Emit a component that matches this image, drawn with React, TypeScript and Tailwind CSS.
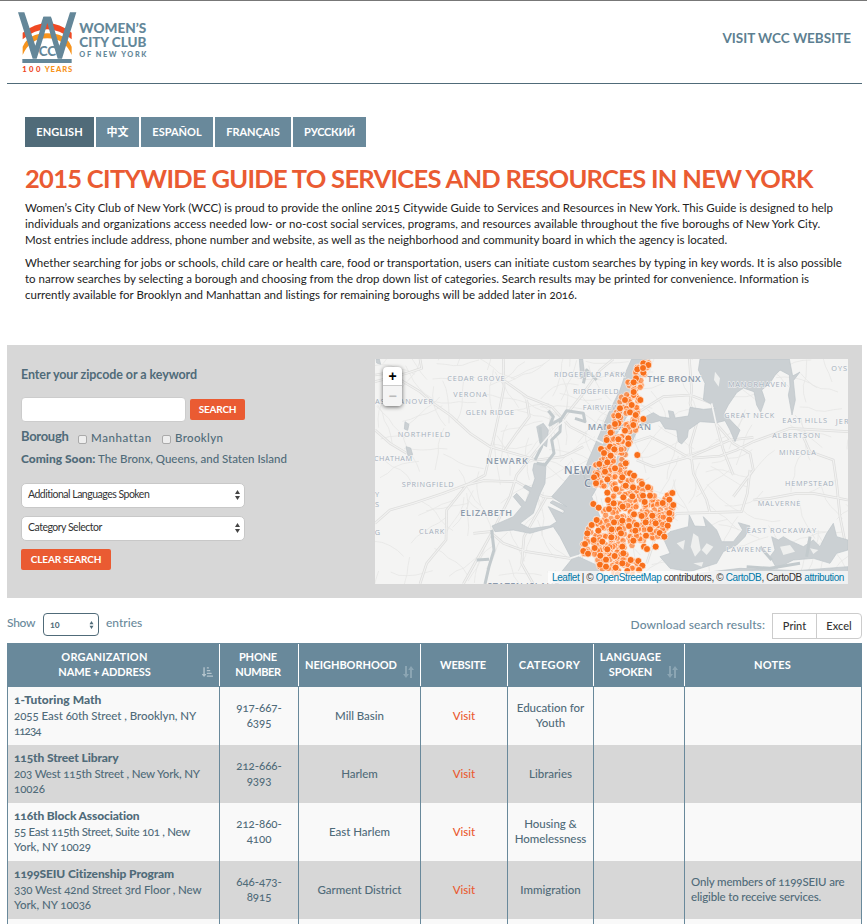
import { FaSortAmountDownAlt } from "react-icons/fa";

const tabs = [
  { label: "ENGLISH", cls: "w-[69px] bg-[#506b79]" },
  { label: "中文", cls: "w-[43px] bg-[#69899b]" },
  { label: "ESPAÑOL", cls: "w-[72px] bg-[#69899b]" },
  { label: "FRANÇAIS", cls: "w-[76px] bg-[#69899b]" },
  { label: "РУССКИЙ", cls: "w-[73px] bg-[#69899b] tracking-[-0.25px]" },
];

const intro = [
  [
    ["Women’s City Club of New York (WCC) is proud to provide the online 2015 Citywide Guide to Services and Resources in New York. This Guide is designed to help", "tracking-[-0.01px]"],
    ["individuals and organizations access needed low- or no-cost social services, programs, and resources available throughout the five boroughs of New York City.", "tracking-[0.027px]"],
    ["Most entries include address, phone number and website, as well as the neighborhood and community board in which the agency is located.", "tracking-[0.002px]"],
  ],
  [
    ["Whether searching for jobs or schools, child care or health care, food or transportation, users can initiate custom searches by typing in key words. It is also possible", "tracking-[0.008px]"],
    ["to narrow searches by selecting a borough and choosing from the drop down list of categories. Search results may be printed for convenience. Information is", "tracking-[0.003px]"],
    ["currently available for Brooklyn and Manhattan and listings for remaining boroughs will be added later in 2016.", "tracking-[-0.008px]"],
  ],
];

const rows = [
  { name: "1-Tutoring Math", nameCls: "tracking-[0.03px]", addr: ["2055 East 60th Street , Brooklyn, NY", "11234"], addrCls: ["tracking-[-0.05px]", "tracking-[-0.9px]"], phone: ["917-667-", "6395"], hood: "Mill Basin", cat: ["Education for", "Youth"], notes: [] as string[] },
  { name: "115th Street Library", nameCls: "tracking-[-0.12px]", addr: ["203 West 115th Street , New York, NY", "10026"], addrCls: ["tracking-[-0.17px]", ""], phone: ["212-666-", "9393"], hood: "Harlem", cat: ["Libraries"], notes: [] },
  { name: "116th Block Association", nameCls: "tracking-[-0.14px]", addr: ["55 East 115th Street, Suite 101 , New", "York, NY 10029"], addrCls: ["tracking-[-0.3px]", "tracking-[-0.05px]"], phone: ["212-860-", "4100"], hood: "East Harlem", cat: ["Housing &", "Homelessness"], notes: [] },
  { name: "1199SEIU Citizenship Program", nameCls: "tracking-[-0.1px]", addr: ["330 West 42nd Street 3rd Floor , New", "York, NY 10036"], addrCls: ["tracking-[-0.08px]", "tracking-[-0.05px]"], phone: ["646-473-", "8915"], hood: "Garment District", cat: ["Immigration"], notes: ["Only members of 1199SEIU are", "eligible to receive services."] },
];

const GRID = "grid grid-cols-[212px_79px_122px_87px_86px_91px_177px]";

function Logo() {
  return (
    <svg className="ml-[11px] mt-[10px] h-[66px] w-[130px]" viewBox="54 33 390 198">
      <path d="M130 50H153L160 72H123Z" fill="#648799" />
      <path d="M68 98Q142 42 215 98V118Q142 58 68 118Z" fill="#f04923" />
      <path d="M68 140Q86 100 142 100Q198 100 215 140V165Q194 115 142 115Q90 115 68 165Z" fill="#f7941d" />
      <path d="M54 37H73L106 137L116 104L131 50H152L168 104L178 137L210 37H229L186 176H173L152 106L142 68L132 106L110 176H98Z" fill="#648799" />
      <text x="142" y="168" textAnchor="middle" textLength="52" lengthAdjust="spacingAndGlyphs" fontFamily="Lato" fontWeight="900" fontSize="42" fill="#648799">CC</text>
      <path d="M67 177H215V189H67Z" fill="#648799" />
      <g fontFamily="Lato" fontWeight="900">
        <text x="67" y="216" fontSize="23" textLength="54" fill="#ef4723">100</text>
        <text x="134" y="216" fontSize="23" textLength="83" fill="#f7941d">YEARS</text>
        <g fill="#648799">
          <text x="238" y="98" fontSize="40" textLength="201" lengthAdjust="spacingAndGlyphs">WOMEN’S</text>
          <text x="238" y="140" fontSize="40" textLength="201" lengthAdjust="spacingAndGlyphs">CITY CLUB</text>
          <text x="238" y="171" fontSize="22" textLength="201">OF NEW YORK</text>
        </g>
      </g>
    </svg>
  );
}

/* Map geometry is expressed at three units per screen pixel. */
const WATER = [
  "M785 27L840 27L800 110L770 200L730 270L700 360L690 400L650 400L640 372L655 330L690 250L720 180L750 120L770 60Z",
  "M545 440L580 400L600 375L640 362L700 380L665 440L690 500L640 560L625 620L690 650L720 702L545 702L605 628L570 560L550 530L480 550L430 540L375 545L366 528L430 500L455 470L430 440L440 430L466 458L480 425L460 412L466 405L485 414L495 385L488 360L492 340L528 340L525 400L508 436L490 490L450 520L480 536L540 528L560 515L535 470L580 490L583 482L540 458L548 452L590 470Z",
  "M990 27L985 60L1005 100L1000 150L1020 160L1036 175L1000 178L960 172L955 198L915 204L910 185L895 182L900 205L870 200L850 188L820 203L810 228L870 212L885 236L920 240L925 275L935 282L952 262L955 240L990 215L1040 218L1065 212L1080 240L1095 275L1110 240L1085 214L1062 190L1075 165L1100 128L1120 114L1152 125L1160 165L1172 187L1185 150L1175 120L1200 100L1215 75L1230 60L1258 75L1260 110L1255 135L1266 195L1276 150L1270 92L1290 66L1268 78L1258 27Z",
  "M785 240L800 245L770 310L750 360L735 340L755 290Z",
  "M880 565L900 545L955 530L958 495L974 528L1008 530L1000 500L1040 540L1055 575L1090 575L1118 540L1105 518L1140 528L1125 560L1100 585L1060 605L1040 640L960 665L900 655L870 620L900 610Z",
  "M1205 560L1225 570L1240 560L1260 572L1300 590L1330 570L1350 590L1370 550L1390 520L1400 560L1434 570V600L1400 610L1380 640L1330 625L1270 630L1220 655L1200 620L1215 600Z",
  "M880 690L1000 668L1110 655L1280 662L1434 650V702H860Z",
  "M500 230L520 220L535 240L530 290L510 280Z",
  "M628 27H638L645 80L632 85Z",
  "M105 215l12 8-4 18-10-4ZM108 290l14 4 6 20-14 4ZM18 27l10 0 4 16-12-4Z",
];
const INLETS = "M535 182L550 200L540 225L575 205L590 182L640 190L645 215L615 205M572 210L570 245L545 270L552 310L525 345L500 340M510 230L515 290L495 330M640 100L650 60L680 90M365 540L372 600L357 650L345 702M357 628L320 630M1130 650L1200 655L1290 640M1170 590L1205 630M1320 560L1310 620";
const LAND = [
  "M970 550L985 560L992 600L975 620L962 590Z",
  "M920 580L945 570L940 600Z",
  "M1010 580L1030 590L1010 615L995 600Z",
  "M1230 590L1260 585L1275 605L1240 615Z",
  "M1320 595L1345 600L1330 612Z",
  "M1035 65L1050 85L1046 110L1032 90Z",
  "M970 640L1000 636L995 650Z",
];
const ROADS_MAJOR = [
  "M15 75L60 68L100 95L150 125L190 160L240 195L300 250L360 290L430 310L500 330L580 320L640 290",
  "M400 90L470 140L545 170L600 230L650 255L720 300",
  "M400 27L402 110L385 200L370 270L345 375L290 405L230 480L228 570L170 640L150 702",
  "M470 150L478 200L440 250L405 300",
  "M290 405L340 392L440 395L520 440L600 450",
  "M310 550L360 545L400 580L470 605L600 625L640 610",
  "M15 520L60 480L130 460L220 430L300 400",
  "M15 240L60 280L110 310",
  "M730 27L690 60L640 130L560 230L500 300L440 375L420 440L370 540L280 702",
  "M780 280L840 260L900 290L960 325L1050 318L1100 300L1150 275L1260 235L1434 245",
  "M800 330L850 350L960 320L1080 270L1150 262",
  "M958 27L965 120L960 160L980 220L960 290L970 370L1010 450L1020 490",
  "M800 190L880 140L960 135L1025 160L1038 220L1090 280L1140 310L1150 360L1090 440",
  "M1038 220L1060 300L1080 350L1090 375",
  "M1140 360L1132 430L1115 485L1010 488L920 490L860 550L830 640",
  "M1150 450L1200 445L1280 430L1330 430L1434 450",
  "M1300 260L1320 305L1390 330L1400 400L1410 500L1430 600",
  "M640 610L625 640L700 660L790 690",
  "M490 702L455 640L462 560L530 440",
  "M150 27L155 55L110 70L15 95",
  "M780 540L830 500L880 490",
];
const LABELS: [string, number, number, number, number, string][] = [
  ["CEDAR GROVE", 232, 94, 172, 22, "#a3aebb"], ["VERONA", 250, 141, 101, 22, "#a3aebb"],
  ["GLEN RIDGE", 287, 194, 145, 22, "#a3aebb"], ["NORTHFIELD", 83, 262, 157, 22, "#a3aebb"],
  ["EAST HANOVER", 0, 162, 189, 22, "#a3aebb"], ["CHATHAM", 12, 334, 114, 22, "#a3aebb"],
  ["NEWARK", 348, 343, 125, 27, "#8c9aab"], ["RIDGEFIELD PARK", 552, 82, 212, 22, "#a3aebb"],
  ["RIDGEFIELD", 609, 132, 137, 22, "#a3aebb"], ["FAIRVIEW", 638, 179, 108, 22, "#a3aebb"],
  ["MANHATTAN", 653, 240, 190, 27, "#8c9aab"], ["NEW YORK", 582, 371, 190, 33, "#7c8b9f"],
  ["CITY", 642, 412, 80, 33, "#7c8b9f"], ["THE BRONX", 832, 97, 160, 27, "#8c9aab"],
  ["MANORHAVEN", 1074, 112, 174, 22, "#a3aebb"], ["GREAT NECK", 1063, 205, 150, 22, "#a3aebb"],
  ["EAST HILLS", 1237, 220, 134, 22, "#a3aebb"], ["JERICHO", 1397, 223, 105, 22, "#a3aebb"],
  ["ALBERTSON", 1207, 264, 143, 22, "#a3aebb"], ["MINEOLA", 1227, 316, 111, 22, "#a3aebb"],
  ["OYSTER BAY", 1384, 64, 150, 22, "#a3aebb"], ["SPRINGFIELD", 95, 412, 156, 22, "#a3aebb"],
  ["ELIZABETH", 271, 498, 155, 27, "#8c9aab"], ["CLARK", 147, 551, 76, 22, "#a3aebb"],
  ["STATEN ISLAND", 352, 717, 220, 27, "#8c9aab"], ["HEMPSTEAD", 1245, 409, 146, 22, "#a3aebb"],
  ["MALVERNE", 1163, 469, 128, 22, "#a3aebb"], ["EAST ROCKAWAY", 1130, 548, 208, 22, "#a3aebb"],
  ["LAWRENCE", 1069, 605, 135, 22, "#a3aebb"], ["Y", 15, 441, 12, 22, "#a3aebb"], ["S", 15, 471, 10, 22, "#a3aebb"], ["G", 14, 555, 14, 22, "#a3aebb"],
];
const PINS: number[][] = [
  [820,40],[835,45],[802,58],[820,68],[819,54],[798,85],[791,97],[791,126],[811,150],[765,150],[785,165],[750,175],[780,187],[797,195],[820,207],[745,197],[745,220],[765,242],[790,225],[725,247],[748,267],[775,265],[775,282],[735,300],[802,315],[767,340],[735,355],[780,370],
  [735,222],[722,248],[710,270],[745,268],[693,297],[702,309],[720,290],[733,298],[722,317],[688,342],[712,337],[704,360],[735,355],[680,375],
  [672,382],[678,400],[712,388],[705,365],[738,417],[712,428],[714,450],[732,460],[670,462],[686,473],[717,477],[680,510],[665,525],[732,517],[652,550],[685,542],[725,538],[645,582],[671,570],[697,575],[725,562],[640,603],[654,611],[674,594],[712,598],[691,617],[733,619],[708,629],[690,644],[708,650],[735,652],
  [757,382],[792,377],[738,417],[767,407],[789,412],[816,402],[834,412],[760,442],[787,439],[819,437],[840,437],[731,460],[758,470],[824,456],[907,429],[898,449],[878,459],[910,465],[898,489],[898,509],[893,527],[792,493],[815,498],[847,497],[732,517],[757,512],[777,528],[800,525],[827,517],[857,520],[724,562],[748,538],[753,550],[796,542],[840,538],[869,549],[883,560],[828,557],[790,572],[757,590],[760,610],[822,590],[831,597],[857,590],[734,618],[757,640],[782,630],[805,633],[817,647],[737,653],[772,663],[807,660],
];
const HULL = [[805,45],[840,35],[812,110],[800,170],[822,210],[790,250],[775,300],[770,345],[800,385],[845,415],[860,450],[905,425],[912,470],[895,540],[880,565],[835,570],[800,578],[765,600],[775,625],[820,635],[820,660],[760,680],[690,660],[680,620],[636,610],[638,560],[680,500],[705,470],[695,420],[666,400],[672,355],[700,280],[730,200],[755,140],[775,90]];

function inside(x: number, y: number) {
  let hit = false;
  for (let i = 0, j = HULL.length - 1; i < HULL.length; j = i++) {
    const [xi, yi] = HULL[i];
    const [xj, yj] = HULL[j];
    if (yi > y !== yj > y && x < ((xj - xi) * (y - yi)) / (yj - yi) + xi) hit = !hit;
  }
  return hit;
}

function seeded(seed: number) {
  let s = seed;
  return () => (s = (s * 16807) % 2147483647) / 2147483647;
}

const rnd = seeded(71);
const FILL_PINS: number[][] = [];
while (FILL_PINS.length < 560) {
  const x = 630 + rnd() * 290;
  const y = 30 + rnd() * 650;
  if (inside(x, y)) FILL_PINS.push([x, y]);
}
const MINOR: string[] = [];
for (let i = 0; i < 210; i++) {
  let x = rnd() * 1434;
  let y = 27 + rnd() * 675;
  let a = rnd() * 6.28;
  let d = `M${x.toFixed(0)} ${y.toFixed(0)}`;
  for (let k = 0; k < 5; k++) {
    a += (rnd() - 0.5) * 0.7;
    x += Math.cos(a) * 26;
    y += Math.sin(a) * 26;
    d += `L${x.toFixed(0)} ${y.toFixed(0)}`;
  }
  MINOR.push(d);
}

function CityMap() {
  return (
    <div className="relative mt-[14px] h-[225px] w-[473px] overflow-hidden bg-[#f4f4f3]">
      <svg className="block h-[225px] w-[473px]" viewBox="15 27 1419 675">
        <g fill="none" strokeLinejoin="round">
          <path d={MINOR.join("")} stroke="#e7e7e6" strokeWidth="2.5" />
          <path d={ROADS_MAJOR.join("")} stroke="#dededd" strokeWidth="8" />
          <path d={ROADS_MAJOR.join("")} stroke="#f1f1f0" strokeWidth="3.5" />
        </g>
        <path d={WATER.join("")} fill="#cbd0d3" stroke="#bcc4c8" strokeWidth="2" />
        <path d={INLETS} fill="none" stroke="#c3cacd" strokeWidth="9" strokeLinejoin="round" />
        <path d={LAND.join("")} fill="#eeefee" />
        <path d="M600 625L640 612M1025 160L1038 220M500 300L560 230L600 200M650 255L700 280" fill="none" stroke="#f4f4f3" strokeWidth="5" />
        <g fontFamily="'Open Sans'" stroke="#f7f7f7" strokeOpacity="0.7" strokeWidth="4" paintOrder="stroke">
          {LABELS.map(([t, x, y, w, s, c]) => (
            <text key={t} x={x} y={y} textLength={w} fontSize={s} fill={c} fontWeight={s > 25 ? 600 : 500}>{t}</text>
          ))}
        </g>
        <g fill="#ff7a2b" fillOpacity="0.7" stroke="#fff" strokeOpacity="0.75" strokeWidth="2.5">
          {FILL_PINS.map(([x, y], i) => <circle key={i} cx={x} cy={y} r="9.5" />)}
        </g>
        <g fill="#f86f1b" stroke="#fff" strokeOpacity="0.8" strokeWidth="2.5">
          {PINS.map(([x, y], i) => <circle key={i} cx={x} cy={y} r="10.5" />)}
        </g>
      </svg>
      <div className="absolute left-[8px] top-[8px] flex h-[39px] w-[19px] flex-col overflow-hidden rounded-[4px] bg-white font-['Liberation_Sans'] text-[14px] font-bold leading-none shadow-[0_1px_4px_rgba(0,0,0,0.6)]">
        <div className="flex h-[19px] items-center justify-center border-b border-[#ccc] text-black">+</div>
        <div className="flex flex-1 items-center justify-center bg-[#f4f4f4] text-[#bbb]">−</div>
      </div>
      <div className="absolute bottom-0 right-0 flex h-[13px] w-[300px] items-center justify-center whitespace-pre bg-white/70 font-['Liberation_Sans'] text-[10px] leading-none tracking-[-0.38px] text-[#333]">
        <span className="text-[#0078a8]">Leaflet</span> | © <span className="text-[#0078a8]">OpenStreetMap</span> contributors, © <span className="text-[#0078a8]">CartoDB</span>, CartoDB <span className="text-[#0078a8]">attribution</span>
      </div>
    </div>
  );
}

function Arrows({ className }: { className: string }) {
  return (
    <svg viewBox="0 0 5 10" className={className} fill="currentColor">
      <path d="M2.5 0L5 4H0ZM0 6H5L2.5 10Z" />
    </svg>
  );
}

function SelectBox({ label, tracking }: { label: string; tracking: string }) {
  return (
    <div className="flex h-[25px] w-[224px] items-center justify-between rounded-[5px] border border-[#c8c8c8] bg-white pb-px pl-[6px] pr-[4px] text-[10.5px] text-[#333]">
      <span className={tracking}>{label}</span>
      <Arrows className="h-[10px] w-[5px] text-[#444]" />
    </div>
  );
}

function SortBoth({ className }: { className: string }) {
  return (
    <svg viewBox="0 0 11 12" className={className} fill="#8ba5b3">
      <path d="M2 0H4V8H6L3 12L0 8H2ZM7 12H9V4H11L8 0L5.2 4H7Z" />
    </svg>
  );
}

function HeadCell({ lines, className = "", children }: { lines: [string, string][]; className?: string; children?: React.ReactNode }) {
  return (
    <div className="relative flex flex-col items-center justify-center border-r border-white pb-[2px] pr-[2px]">
      {lines.map(([t, tr]) => (
        <span key={t} className={`${tr} ${className}`}>{t}</span>
      ))}
      {children}
    </div>
  );
}

function Cell({ lines, className = "items-center" }: { lines: string[]; className?: string }) {
  return (
    <div className={`flex flex-col justify-center border-r border-[#69899b] pb-[2px] ${className}`}>
      {lines.map((l) => <span key={l}>{l}</span>)}
    </div>
  );
}

export default function App() {
  return (
    <div className="h-[924px] w-[867px] overflow-hidden whitespace-nowrap border-t border-[#777] bg-white px-[7px] font-['Lato','Noto_Sans_CJK_SC',sans-serif]">
      <header className="flex h-[83px] w-[855px] justify-between border-b border-[#506b79]">
        <Logo />
        <a className="mr-[11px] mt-[28px] text-[13.5px] font-bold leading-[18px] text-[#5d7f91]">VISIT WCC WEBSITE</a>
      </header>

      <section className="h-[261px] pl-[18px] pt-[33px]">
        <nav className="flex gap-[2px]">
          {tabs.map((t) => (
            <a key={t.label} className={`flex h-[30px] items-center justify-center text-[11px] font-bold text-white ${t.cls}`}>{t.label}</a>
          ))}
        </nav>
        <h1 className="mt-[15px] text-[25.5px] font-bold leading-[32px] tracking-[-0.7px] text-[#ea5b32]">2015 CITYWIDE GUIDE TO SERVICES AND RESOURCES IN NEW YORK</h1>
        <div className="mt-[6px] flex flex-col gap-[7px] text-[11.5px] leading-[16px] text-[#222] [font-feature-settings:'onum']">
          {intro.map((p, i) => (
            <div key={i}>
              {p.map(([l, tr]) => <p key={l} className={tr}>{l}</p>)}
            </div>
          ))}
        </div>
      </section>

      <section className="flex h-[253px] w-[855px] justify-between bg-[#d7d7d7] pl-[14px] pr-[14px] text-[#506b79]">
        <div className="pt-[21px]">
          <div className="text-[12.5px] font-bold leading-[18px] tracking-[-0.08px]">Enter your zipcode or a keyword</div>
          <div className="mt-[13px] flex items-center gap-[4px]">
            <div className="h-[25px] w-[165px] rounded-[4px] border border-[#ccc] bg-white" />
            <div className="flex h-[21px] w-[55px] items-center justify-center rounded-[2px] bg-[#ea5b32] text-[10px] font-bold tracking-[-0.2px] text-white">SEARCH</div>
          </div>
          <div className="mt-[6px] flex h-[18px] items-center text-[11.5px] font-medium">
            <span className="w-[57px] text-[13px] font-bold tracking-[-0.3px]">Borough</span>
            <span className="mt-[4px] h-[9px] w-[9px] rounded-[2px] border border-[#aaa] bg-[#eee]" />
            <span className="ml-[4px] mt-[2px] w-[71px] tracking-[0.6px]">Manhattan</span>
            <span className="mt-[4px] h-[9px] w-[9px] rounded-[2px] border border-[#aaa] bg-[#eee]" />
            <span className="ml-[4px] mt-[2px] tracking-[0.35px]">Brooklyn</span>
          </div>
          <div className="mt-[5px] text-[11.5px] font-medium leading-[16px]">
            <span className="text-[12px] font-black">Coming Soon:</span> The Bronx, Queens, and Staten Island
          </div>
          <div className="mt-[16px] flex flex-col gap-[8px]">
            <SelectBox label="Additional Languages Spoken" tracking="tracking-[-0.5px]" />
            <SelectBox label="Category Selector" tracking="tracking-[-0.5px]" />
          </div>
          <div className="mt-[8px] flex h-[21px] w-[90px] items-center justify-center rounded-[2px] bg-[#ea5b32] text-[10px] font-bold tracking-[-0.15px] text-white">CLEAR SEARCH</div>
        </div>
        <CityMap />
      </section>

      <div className="flex h-[45px] w-[855px] justify-between pt-[15px] text-[12px] font-medium text-[#69899b]">
        <div className="flex h-[23px] items-center">
          <span className="w-[36px] pb-[3px] tracking-[-0.3px]">Show</span>
          <div className="flex h-[23px] w-[56px] items-center justify-between rounded-[4px] border border-[#506b79] pl-[6px] pr-[4px] text-[9px] font-bold text-[#506b79] [font-feature-settings:'onum']">
            10
            <Arrows className="h-[8px] w-[5px] text-[#506b79]" />
          </div>
          <span className="ml-[7px] pb-[3px]">entries</span>
        </div>
        <div className="flex h-[26px]">
          <span className="mr-[7px] pt-[3px] tracking-[0.08px]">Download search results:</span>
          <div className="flex w-[45px] items-center justify-center border border-[#ccc] text-[11px] text-[#333]">Print</div>
          <div className="-ml-px flex w-[46px] items-center justify-center rounded-r-[4px] border border-[#ccc] text-[11px] text-[#333]">Excel</div>
        </div>
      </div>

      <div className="w-[855px] border-l border-[#69899b] text-[11.5px] font-medium leading-[15px] tracking-[-0.04px] text-[#506b79] [font-feature-settings:'onum']">
        <div className={`${GRID} h-[44px] bg-[#69899b] py-px text-[11px] font-bold text-white`}>
          <HeadCell className="mr-[16px]" lines={[["ORGANIZATION", "tracking-[0.2px]"], ["NAME + ADDRESS", "tracking-[-0.08px]"]]}>
            <FaSortAmountDownAlt className="absolute bottom-[8px] right-[6px] h-[12px] w-[11px] text-[#b4c4cd]" />
          </HeadCell>
          <HeadCell lines={[["PHONE", "tracking-[-0.2px]"], ["NUMBER", "tracking-[-0.4px]"]]} />
          <HeadCell className="mr-[15px]" lines={[["NEIGHBORHOOD", ""]]}>
            <SortBoth className="absolute bottom-[8px] right-[6px] h-[12px] w-[11px]" />
          </HeadCell>
          <HeadCell lines={[["WEBSITE", "tracking-[-0.2px]"]]} />
          <HeadCell lines={[["CATEGORY", "tracking-[0.5px]"]]} />
          <HeadCell className="mr-[15px]" lines={[["LANGUAGE", "tracking-[0.25px]"], ["SPOKEN", "tracking-[-0.1px]"]]}>
            <SortBoth className="absolute bottom-[8px] right-[6px] h-[12px] w-[11px]" />
          </HeadCell>
          <div className="flex items-center justify-center pb-[2px] pr-[2px] tracking-[0.2px]">NOTES</div>
        </div>
        {rows.map((r, i) => (
          <div key={r.name} className={`${GRID} h-[58px] ${i % 2 ? "bg-[#d7d7d7]" : "bg-[#f9f9f9]"}`}>
            <div className="flex flex-col justify-center border-r border-[#69899b] pb-[2px] pl-[6px]">
              <span className={`mb-px text-[12px] font-black ${r.nameCls}`}>{r.name}</span>
              <span className={r.addrCls[0]}>{r.addr[0]}</span>
              <span className={r.addrCls[1]}>{r.addr[1]}</span>
            </div>
            <Cell lines={r.phone} />
            <Cell lines={[r.hood]} />
            <Cell lines={["Visit"]} className="items-center text-[#ea5b32]" />
            <Cell lines={r.cat} />
            <Cell lines={[]} />
            <Cell lines={r.notes} className="items-start pl-[6px] tracking-[-0.16px]" />
          </div>
        ))}
        <div className={`${GRID} h-[10px] bg-[#f9f9f9]`}>
          {[0, 1, 2, 3, 4, 5, 6].map((k) => <Cell key={k} lines={[]} />)}
        </div>
      </div>
    </div>
  );
}
